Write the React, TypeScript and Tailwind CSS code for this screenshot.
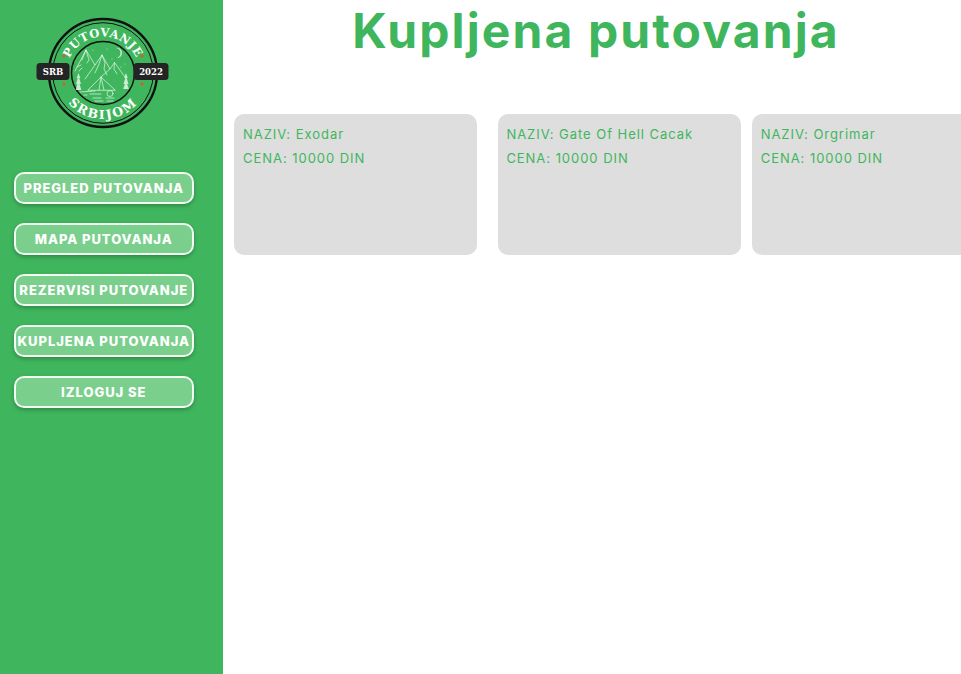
const navItems = [
  "PREGLED PUTOVANJA",
  "MAPA PUTOVANJA",
  "REZERVISI PUTOVANJE",
  "KUPLJENA PUTOVANJA",
  "IZLOGUJ SE",
];

const trips = [
  { name: "Exodar", price: 10000, className: "ml-[11.3px]" },
  { name: "Gate Of Hell Cacak", price: 10000, className: "ml-[20.4px]" },
  { name: "Orgrimar", price: 10000, className: "ml-[11.3px]" },
];

const Logo = () => (
  <svg width="136" height="112" viewBox="0 0 136 112" className="block">
    <defs>
      <path id="arc-top" d="M 31.5 56 A 36.5 36.5 0 0 1 104.5 56" />
      <path id="arc-bottom" d="M 22 56 A 46 46 0 0 0 114 56" />
    </defs>
    <circle cx="68" cy="56" r="54" fill="none" stroke="#111" strokeWidth="2.4" />
    <circle cx="68" cy="56" r="50.3" fill="none" stroke="#111" strokeWidth="1" />
    <circle cx="68" cy="56" r="31.5" fill="none" stroke="#111" strokeWidth="1.5" />
    <text fill="#fff" fontFamily="'DejaVu Serif', serif" fontWeight="700" fontSize="11.5" letterSpacing="0.6">
      <textPath href="#arc-top" startOffset="50%" textAnchor="middle">PUTOVANJE</textPath>
    </text>
    <text fill="#fff" fontFamily="'DejaVu Serif', serif" fontWeight="700" fontSize="12.5" letterSpacing="1.8">
      <textPath href="#arc-bottom" startOffset="50%" textAnchor="middle">SRBIJOM</textPath>
    </text>
    {/* mountains and tent */}
    <g fill="none" stroke="#e4f6e8" strokeWidth="0.7" strokeLinejoin="round" strokeLinecap="round">
      <path d="M40 54 L51 33 L60 48 L67 38 L75 52 L79.5 45.5 L90 60" />
      <path d="M51 33 L47 43 M51 33 L54 43 L52 46 M42 50 L46 48 M44 54 L47 51" />
      <path d="M67 38 L64 47 L60 56 M67 38 L70 46 L69 52 L72 58 M79.5 45.5 L79 52 L82 57" />
      <path d="M60 48 L50 62 M75 52 L66 60" />
      <path d="M53 73 L66 60 L80 73 Z M66 60 L64 73 M66 60 L69 73" />
      <path d="M45 75 L60 74 M49 78 L52 78 M55 77 L66 77 M58 81 L66 81 M60 84 L68 84" />
      <circle cx="75" cy="76.5" r="3" />
      <path d="M71 81 h8 M72 84 h6" />
    </g>
    <g fill="#e4f6e8" fillOpacity="0.85">
      <path d="M43.5 56 L45.3 61 L44.2 61 L46 67 L44.6 67 L46.3 73 L40.7 73 L42.4 67 L41 67 L42.8 61 L41.7 61 Z" />
      <path d="M91 56 L92.8 61 L91.7 61 L93.5 67 L92.1 67 L93.8 72 L88.2 72 L89.9 67 L88.5 67 L90.3 61 L89.2 61 Z" />
      <path d="M80 31 A 5.2 5.2 0 1 1 81 41 A 4.2 4.2 0 0 0 80 31 Z" />
      <circle cx="58" cy="33" r="0.5" />
      <circle cx="72" cy="32" r="0.5" />
      <circle cx="90" cy="47" r="0.5" />
      <circle cx="77" cy="42" r="0.5" />
      <circle cx="86" cy="50" r="0.5" />
    </g>
    {/* red dots */}
    <circle cx="29" cy="39" r="1.6" fill="#e2562b" />
    <circle cx="107" cy="39" r="1.6" fill="#e2562b" />
    <circle cx="29" cy="67" r="1.6" fill="#e2562b" />
    <circle cx="107" cy="67" r="1.6" fill="#e2562b" />
    {/* side labels */}
    <rect x="1.5" y="46" width="33" height="17" rx="3.5" fill="#242424" />
    <rect x="98.5" y="46" width="35" height="17" rx="3.5" fill="#242424" />
    <text x="18" y="58" textAnchor="middle" fill="#fff" fontFamily="'DejaVu Serif', serif" fontWeight="700" fontSize="8.5">SRB</text>
    <text x="116" y="58" textAnchor="middle" fill="#fff" fontFamily="'DejaVu Serif', serif" fontWeight="700" fontSize="8.5">2022</text>
  </svg>
);

const App = () => {
  return (
    <div className="flex h-[674px] w-[961px] overflow-hidden bg-white font-['Inter',sans-serif]">
      <aside className="flex w-[223px] shrink-0 flex-col bg-[#3fb65d]">
        <div className="pl-[35px] pt-[17px]">
          <Logo />
        </div>
        <nav className="mt-[43px] flex flex-col gap-[19px] pl-[14px]">
          {navItems.map((item) => (
            <button
              key={item}
              className="flex h-[32px] w-[179.5px] items-center justify-center whitespace-nowrap rounded-[10px] border-2 border-white/90 bg-[#7bcf8c] pt-[1px] text-[13px] font-extrabold tracking-[0.95px] text-white shadow-[0_2px_4px_rgba(0,0,0,0.25)]"
            >
              {item}
            </button>
          ))}
        </nav>
      </aside>
      <main className="min-w-0 flex-1">
        <h1 className="mt-[2px] pl-[8px] text-center text-[48px] font-bold leading-[58px] tracking-[2.12px] text-[#3fb65d]">
          Kupljena putovanja
        </h1>
        <div className="mt-[54px] flex">
          {trips.map((trip) => (
            <div
              key={trip.name}
              className={`h-[141px] w-[243px] shrink-0 rounded-[10px] bg-[#dedede] px-[8.7px] pt-[8px] text-[13px] leading-[24px] tracking-[0.96px] text-[#3fb65d] ${trip.className}`}
            >
              <p>NAZIV: {trip.name}</p>
              <p>CENA: {trip.price} DIN</p>
            </div>
          ))}
        </div>
      </main>
    </div>
  );
};

export default App;
